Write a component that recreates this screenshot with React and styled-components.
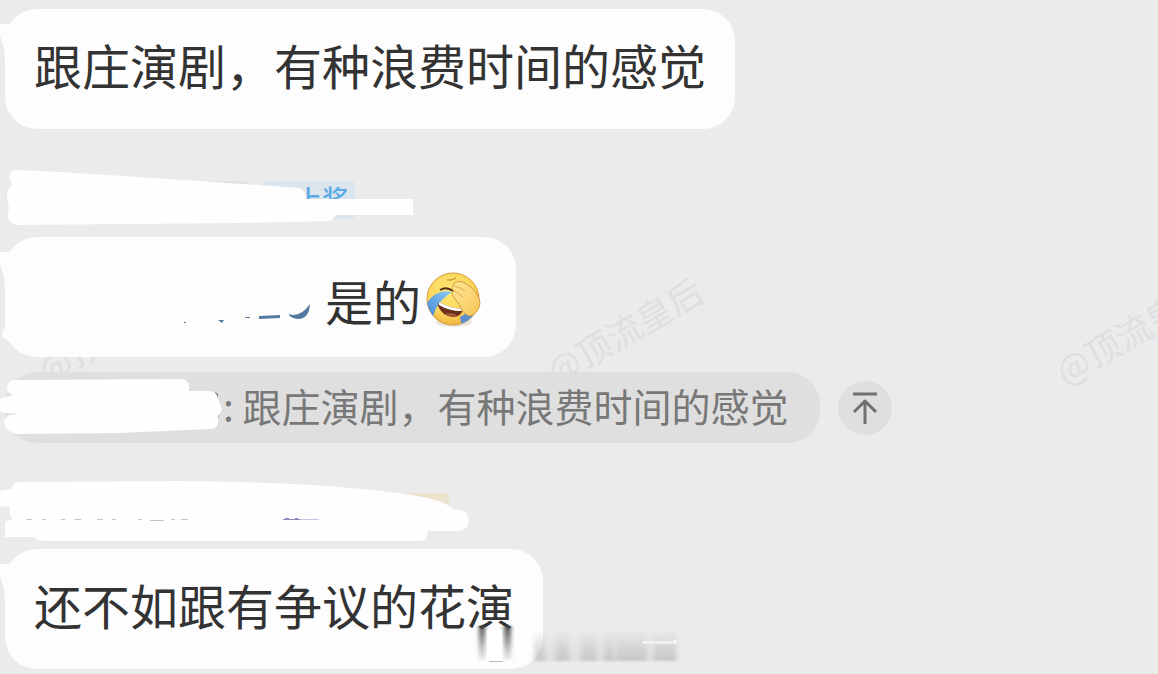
import React from "react";
import styled, { createGlobalStyle } from "styled-components";

const GlobalStyle = createGlobalStyle`
  * {
    box-sizing: border-box;
  }
  body {
    margin: 0;
    background: #ebebeb;
    color: #333;
    font-family: "Noto Sans CJK SC", "Noto Sans", sans-serif;
  }
`;

const Chat = styled.main`
  position: relative;
  min-height: 100vh;
  padding: 9px 5px 5px;
  overflow: hidden;
`;

const Watermarks = styled.div`
  position: absolute;
  top: 353px;
  left: 40px;
  display: flex;
  color: #dfdfdf;
  font-size: 35px;
  line-height: 40px;
  pointer-events: none;
  span {
    flex: 0 0 509px;
    transform: rotate(-30deg);
    transform-origin: 0 50%;
  }
`;

const Message = styled.section`
  position: relative;
  margin-top: ${({ $gap }) => $gap || 0}px;
`;

const Head = styled.div`
  position: relative;
  display: flex;
  gap: 14px;
  height: 38px;
  margin-bottom: 18px;
  padding-left: ${({ $indent }) => $indent}px;
`;

const Tag = styled.span`
  width: ${({ $width }) => $width}px;
  padding-right: 7px;
  border-radius: 4px;
  background: ${({ $bg }) => $bg};
  color: #5aaae6;
  font-size: 26px;
  font-weight: 500;
  line-height: 34px;
  text-align: right;
`;

const Bubble = styled.div`
  position: relative;
  display: flex;
  align-items: center;
  width: fit-content;
  min-height: 120px;
  padding: ${({ $rich }) => ($rich ? "6px 29px 0" : "0 29px 10px")};
  border-radius: 32px;
  background: #fdfdfd;
  font-size: 48px;
  line-height: 72px;
  p {
    margin: 0;
  }
`;

const Tail = styled.svg`
  position: absolute;
  top: 14px;
  left: -5px;
`;

const Mention = styled.svg`
  flex: none;
  width: 291px;
  height: 60px;
`;

const Emoji = styled.svg`
  flex: none;
  width: 58px;
  height: 58px;
  margin: 0 4px;
`;

/* brush strokes painted over names */
const Scribble = styled.svg`
  position: absolute;
  top: -14px;
  left: -5px;
  overflow: visible;
`;

const QuoteRow = styled.div`
  display: flex;
  align-items: center;
  gap: 18px;
  margin-top: 15px;
`;

const Quote = styled.blockquote`
  position: relative;
  margin: 0;
  padding: 0 31px 4px 218px;
  border-radius: 32px;
  background: #dfdfdf;
  color: #787878;
  font-size: 39px;
  line-height: 67px;
  white-space: pre;
`;

const TopButton = styled.button`
  display: grid;
  place-items: center;
  width: 54px;
  height: 54px;
  padding: 0;
  border: none;
  border-radius: 50%;
  background: #dfdfdf;
  color: #707070;
  cursor: pointer;
`;

const Smear = styled.svg`
  position: absolute;
  top: 66px;
  left: 465px;
`;

const BubbleTail = () => (
  <Tail width="24" height="50" viewBox="0 0 24 50" aria-hidden="true">
    <path d="M0 1H24V50H5Q6 24 0 14Z" fill="#fdfdfd" />
  </Tail>
);

const LaughCry = () => (
  <Emoji viewBox="0 0 58 58" role="img" aria-label="笑哭">
    <defs>
      <radialGradient id="face" cx="45%" cy="35%" r="65%">
        <stop offset="0" stopColor="#ffea78" />
        <stop offset="0.7" stopColor="#fbd458" />
        <stop offset="1" stopColor="#eeb540" />
      </radialGradient>
      <linearGradient id="tear" x1="1" y1="0" x2="0" y2="1">
        <stop offset="0" stopColor="#8fcdf5" />
        <stop offset="1" stopColor="#3f83d2" />
      </linearGradient>
      <linearGradient id="hand" x1="0" y1="0" x2="1" y2="1">
        <stop offset="0" stopColor="#ffe79a" />
        <stop offset="1" stopColor="#f6c555" />
      </linearGradient>
      <clipPath id="round">
        <circle cx="28" cy="28" r="26" />
      </clipPath>
    </defs>
    <ellipse cx="29" cy="51" rx="18" ry="5" fill="#e9e4dc" />
    <circle cx="28" cy="28" r="26" fill="url(#face)" stroke="#d69b3c" />
    <g clipPath="url(#round)">
      <path d="M27 21C18 18 6 23 1 34L8 48C9 37 16 28 27 21Z" fill="url(#tear)" />
      <path d="M35 46L45 40L49 45L37 56Z" fill="#5c8fd0" />
    </g>
    <path d="M14 31Q25 37 38 38Q36 46 28 46Q17 45 13 35Z" fill="#69301d" />
    <path d="M14 31Q25 37 38 38L36 40Q24 40 14 34Z" fill="#fff" />
    <path d="M20 43Q27 40 33 45Q27 48 20 43Z" fill="#a6563a" />
    <path d="M15 19Q21 15 28 20" fill="none" stroke="#51301a" strokeWidth="2" />
    <path d="M22 9Q27 10 31 7" fill="none" stroke="#b77c28" />
    <path
      d="M30 12Q33 9 38 11L46 16Q55 25 55 33Q53 43 45 45Q39 44 35 35L28 25Q26 21 29 20Q26 17 28 15Q28 12 30 12Z"
      fill="url(#hand)"
      stroke="#d49d42"
    />
    <path d="M29 15Q35 16 40 20M29 20Q34 22 38 26" fill="none" stroke="#e0b050" />
  </Emoji>
);

const App = () => {
  return (
    <>
      <GlobalStyle />
      <Chat>
        <Watermarks aria-hidden="true">
          <span>@顶流皇后</span>
          <span>@顶流皇后</span>
          <span>@顶流皇后</span>
        </Watermarks>

        <Message>
          <Bubble>
            <BubbleTail />
            <p>跟庄演剧，有种浪费时间的感觉</p>
          </Bubble>
        </Message>

        <Message $gap={52}>
          <Head $indent={175}>
            <Tag $width={68} $bg="#e0e0e6" />
            <Tag $width={93} $bg="#dde5ed">上奖</Tag>
            <Scribble width="420" height="62" viewBox="0 -14 420 62" aria-hidden="true">
              <path
                d="M15 -11L60 -9L200 0L299 7Q306 9 306 18H413V34H336Q333 40 328 40L240 42L17 44Q8 43 8 34Q8 30 9 27Q4 10 12 4Q8 -4 11 -9Q12 -11 15 -11Z"
                fill="#fefefe"
              />
            </Scribble>
          </Head>
          <Bubble $rich>
            <BubbleTail />
            <Scribble width="40" height="40" viewBox="0 -14 40 40" aria-hidden="true">
              <path d="M30 87L6 90Q-1 97 5 102L12 106H40Z" fill="#fdfdfd" />
            </Scribble>
            <Mention viewBox="0 0 291 60" aria-hidden="true">
              <g fill="#527b9f">
                <path d="M184 50L190 50L188 53Z" />
                <path d="M211 47H216V48H211Z" />
                <path d="M225 46L246 45V48L225 49Z" />
                <path d="M255 44Q266 48 276 34Q275 49 264 49Q257 48 255 45Z" />
                <path d="M150 52H152V53H150Z" />
              </g>
            </Mention>
            <p>是的</p>
            <LaughCry />
          </Bubble>
          <QuoteRow>
            <Quote>
              : 跟庄演剧，有种浪费时间的感觉
              <Scribble width="230" height="80" viewBox="0 -14 230 80" aria-hidden="true">
                <path d="M215 20L218 22V25H215ZM215 44L219 43L218 46H215Z" fill="#777" />
                <path
                  d="M14 8L183 7Q190 9 189 19L210 19Q218 20 218 28Q225 37 218 44V50Q218 56 211 57L120 61L17 62Q5 60 4 49Q6 42 17 42L17 41Q0 42 0 38V27Q6 24 14 23Q7 22 7 15Q8 9 14 8Z"
                  fill="#fefefe"
                />
              </Scribble>
            </Quote>
            <TopButton type="button" aria-label="回到顶部">
              <svg width="26" height="34" viewBox="0 0 26 34" fill="none" stroke="currentColor" strokeWidth="3">
                <path d="M1 3H25M13 33V10M2 21L13 10L24 21" strokeLinejoin="round" />
              </svg>
            </TopButton>
          </QuoteRow>
        </Message>

        <Message $gap={50}>
          <Head $indent={350}>
            <Tag $width={94} $bg="#ede3cf" />
            <Scribble width="480" height="64" viewBox="0 -14 480 64" aria-hidden="true">
              <path
                d="M0 -2L11 -4Q12 -10 18 -11L180 -12Q285 -11 350 -5Q448 3 453 17Q468 15 469 28Q468 38 456 38H428Q427 48 421 48H45Q37 48 35 44H5V28L13 27Q9 24 10 14L0 13Z"
                fill="#fefefe"
              />
              <path
                d="M26 26.5H32M42 26.5H46M61 26.5H65M75 26.5H81M97 26.5H103M112 26.5H116M138 26.5H142M150 27.5H164M171 26.5H175M181 26.5H188"
                stroke="#c4c4ca"
              />
              <path d="M283 26.5H300M285 25.5H289M295 25.5H298" stroke="#8d89bd" />
              <path d="M300 26.5H319" stroke="#c8c5e0" />
            </Scribble>
          </Head>
          <Bubble>
            <BubbleTail />
            <p>还不如跟有争议的花演</p>
            <Smear width="220" height="54" viewBox="470 615 220 54" aria-hidden="true">
              <defs>
                <linearGradient id="fade" x2="0" y2="1">
                  <stop offset="0" stopColor="#b4b4b4" stopOpacity="0" />
                  <stop offset="1" stopColor="#b4b4b4" stopOpacity="0.55" />
                </linearGradient>
                <linearGradient id="ink" x2="0" y2="1">
                  <stop offset="0" stopColor="#444" />
                  <stop offset="0.5" stopColor="#777" stopOpacity="0.7" />
                  <stop offset="1" stopColor="#aaa" stopOpacity="0.25" />
                </linearGradient>
                <filter id="soft" x="-50%" y="-10%" width="200%" height="120%">
                  <feGaussianBlur stdDeviation="2 1" />
                </filter>
              </defs>
              <path d="M476 629H516V661H476Z" fill="#fdfdfd" />
              <g filter="url(#soft)">
                <path d="M479 626H485V660H479ZM504 626H511V660H504Z" fill="url(#ink)" />
                <path d="M534 630H545V661H534ZM555 630H569V661H555ZM581 630H597V661H581ZM604 630H614V661H604Z" fill="url(#fade)" />
                <path d="M616 630H647V661H616ZM654 630H676V661H654Z" fill="url(#fade)" />
                <path d="M534 630H677V661H534Z" fill="url(#fade)" opacity="0.4" />
              </g>
              <path d="M487 630H502V661H487Z" fill="#fff" />
              <path d="M489 661.5H503" stroke="#bbb" />
              <path d="M642 642.5H676" stroke="#f7f7f7" strokeWidth="2" />
              <circle cx="675" cy="642" r="2" fill="#f7f7f7" />
            </Smear>
          </Bubble>
        </Message>
      </Chat>
    </>
  );
};

export default App;
